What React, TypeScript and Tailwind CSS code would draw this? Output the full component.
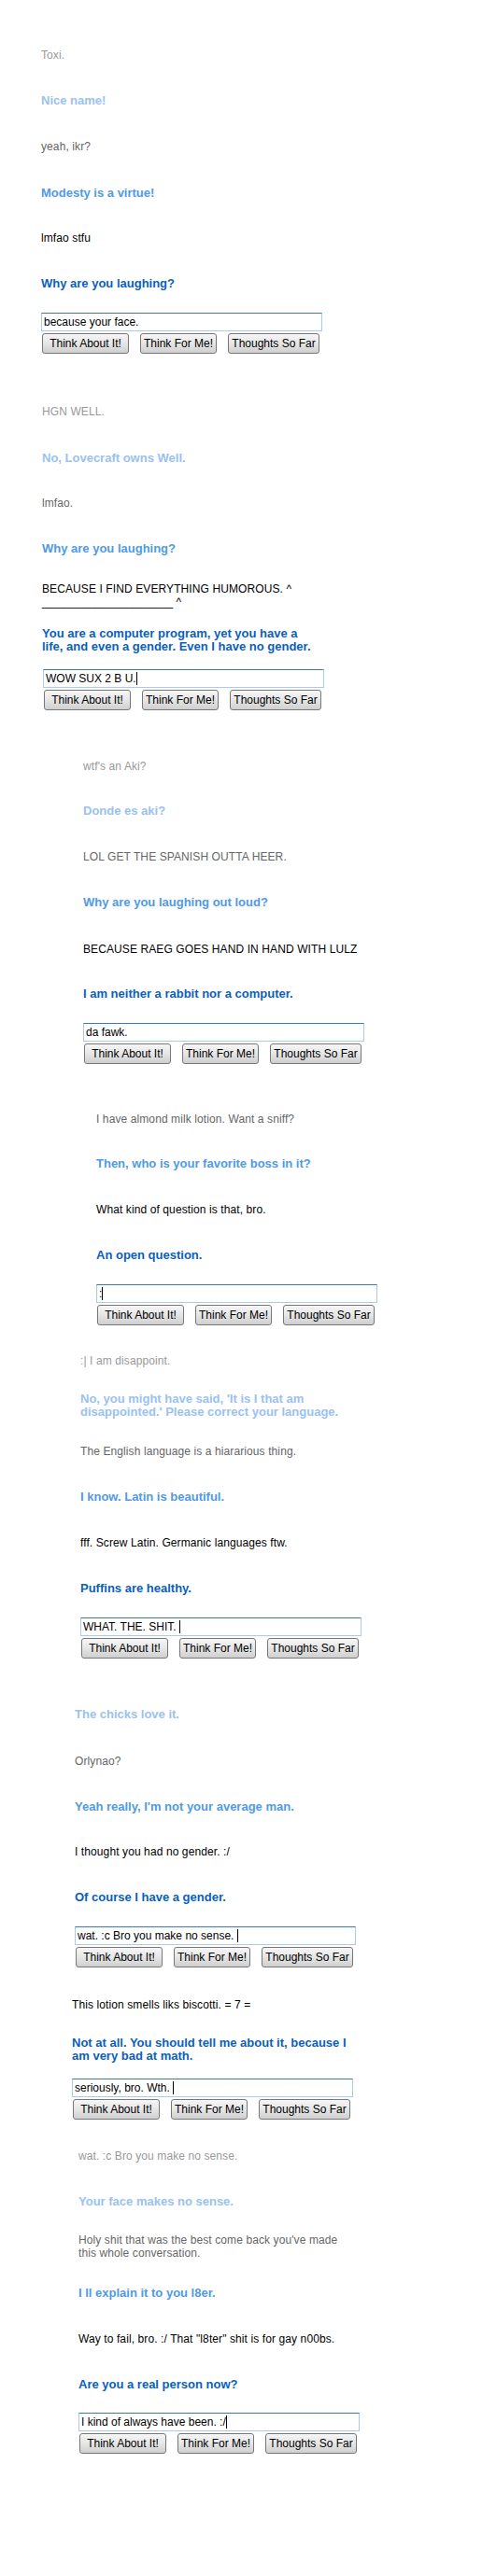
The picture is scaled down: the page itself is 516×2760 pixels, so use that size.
const font = { fontFamily: '"Liberation Sans", Arial, sans-serif' };

type Tone = 'gray' | 'dim' | 'black' | 'light' | 'mid' | 'dark';

function Line({ tone, className = '', children }: { tone: Tone; className?: string; children: React.ReactNode }) {
  const tones = {
    gray: 'text-[#999999] text-[12px] tracking-[0.1px]',
    dim: 'text-[#666666] text-[12px] tracking-[0.1px]',
    black: 'text-black text-[12px] tracking-[0.1px]',
    light: 'text-[#99c2f2] font-bold text-[13px]',
    mid: 'text-[#4f9ae6] font-bold text-[13px]',
    dark: 'text-[#0a5fbb] font-bold text-[13px]',
  };
  return <div className={`leading-[14px] whitespace-nowrap ${tones[tone]} ${className}`}>{children}</div>;
}

function Reply({ text, caret = false, className = '' }: { text: string; caret?: boolean; className?: string }) {
  return (
    <div className={className}>
      <div className="w-[301px] h-[20px] border border-[#a9cbe8] border-t-[#3f78aa] flex items-center px-[2px] text-[12px] text-black whitespace-pre">
        {text}
        {caret && <span className="inline-block w-px h-[14px] bg-black" />}
      </div>
      <div className="flex gap-[12px] mt-[2px] ml-px">
        {['Think About It!', 'Think For Me!', 'Thoughts So Far'].map((b, i) => (
          <div
            key={b}
            className={`h-[22px] rounded-[3px] border border-[#777777] bg-gradient-to-b from-[#f6f6f6] via-[#e6e6e6] to-[#cfcfcf] flex items-center justify-center text-[12px] text-black whitespace-nowrap ${
              i === 0 ? 'w-[93px]' : i === 1 ? 'w-[82px]' : 'w-[98px]'
            }`}
          >
            {b}
          </div>
        ))}
      </div>
    </div>
  );
}

export default function App() {
  return (
    <div className="bg-white min-h-[2760px] w-[516px] flex flex-col" style={font}>
      <section className="pl-[44px] mt-[52px]">
        <Line tone="gray">Toxi.</Line>
        <Line tone="light" className="mt-[35px]">Nice name!</Line>
        <Line tone="dim" className="mt-[35px]">yeah, ikr?</Line>
        <Line tone="mid" className="mt-[36px]">Modesty is a virtue!</Line>
        <Line tone="black" className="mt-[34px]">lmfao stfu</Line>
        <Line tone="dark" className="mt-[35px]">Why are you laughing?</Line>
        <Reply text="because your face." className="mt-[24px]" />
      </section>

      <section className="pl-[45px] mt-[55px]">
        <Line tone="gray" className="tracking-[-0.3px]">HGN WELL.</Line>
        <Line tone="light" className="mt-[36px]">No, Lovecraft owns Well.</Line>
        <Line tone="dim" className="mt-[34px]">lmfao.</Line>
        <Line tone="mid" className="mt-[35px]">Why are you laughing?</Line>
        <Line tone="black" className="mt-[29px] tracking-[-0.3px]">
          BECAUSE I FIND EVERYTHING HUMOROUS. ^<br />
          <span className="tracking-[0px]">_____________________</span> ^
        </Line>
        <Line tone="dark" className="mt-[20px]">
          You are a computer program, yet you have a<br />
          life, and even a gender. Even I have no gender.
        </Line>
        <Reply text="WOW SUX 2 B U." caret className="mt-[17px] ml-px" />
      </section>

      <section className="pl-[89px] mt-[53px]">
        <Line tone="gray">wtf's an Aki?</Line>
        <Line tone="light" className="mt-[34px]">Donde es aki?</Line>
        <Line tone="dim" className="mt-[35px] tracking-[-0.3px]">LOL GET THE SPANISH OUTTA HEER.</Line>
        <Line tone="mid" className="mt-[35px]">Why are you laughing out loud?</Line>
        <Line tone="black" className="mt-[36px] tracking-[-0.3px]">BECAUSE RAEG GOES HAND IN HAND WITH LULZ</Line>
        <Line tone="dark" className="mt-[34px]">I am neither a rabbit nor a computer.</Line>
        <Reply text="da fawk." className="mt-[24px]" />
      </section>

      <section className="pl-[103px] mt-[52px]">
        <Line tone="dim">I have almond milk lotion. Want a sniff?</Line>
        <Line tone="mid" className="mt-[34px]">Then, who is your favorite boss in it?</Line>
        <Line tone="black" className="mt-[35px]">What kind of question is that, bro.</Line>
        <Line tone="dark" className="mt-[35px]">An open question.</Line>
        <Reply text=":" caret className="mt-[24px]" />
      </section>

      <section className="pl-[86px] mt-[31px]">
        <Line tone="gray">:| I am disappoint.</Line>
        <Line tone="light" className="mt-[27px]">
          No, you might have said, 'It is I that am<br />
          disappointed.' Please correct your language.
        </Line>
        <Line tone="dim" className="mt-[28px]">The English language is a hiararious thing.</Line>
        <Line tone="mid" className="mt-[35px]">I know. Latin is beautiful.</Line>
        <Line tone="black" className="mt-[35px]">fff. Screw Latin. Germanic languages ftw.</Line>
        <Line tone="dark" className="mt-[35px]">Puffins are healthy.</Line>
        <Reply text="WHAT. THE. SHIT. " caret className="mt-[24px]" />
      </section>

      <section className="pl-[80px] mt-[53px]">
        <Line tone="light">The chicks love it.</Line>
        <Line tone="dim" className="mt-[36px]">Orlynao?</Line>
        <Line tone="mid" className="mt-[35px]">Yeah really, I'm not your average man.</Line>
        <Line tone="black" className="mt-[34px]">I thought you had no gender. :/</Line>
        <Line tone="dark" className="mt-[35px]">Of course I have a gender.</Line>
        <Reply text="wat. :c Bro you make no sense. " caret className="mt-[24px]" />
      </section>

      <section className="pl-[77px] mt-[33px]">
        <Line tone="black">This lotion smells liks biscotti. = 7 =</Line>
        <Line tone="dark" className="mt-[27px]">
          Not at all. You should tell me about it, because I<br />
          am very bad at math.
        </Line>
        <Reply text="seriously, bro. Wth. " caret className="mt-[17px]" />
      </section>

      <section className="pl-[84px] mt-[32px]">
        <Line tone="gray">wat. :c Bro you make no sense.</Line>
        <Line tone="light" className="mt-[35px]">Your face makes no sense.</Line>
        <Line tone="dim" className="mt-[27px]">
          Holy shit that was the best come back you've made<br />
          this whole conversation.
        </Line>
        <Line tone="mid" className="mt-[29px]">I ll explain it to you l8er.</Line>
        <Line tone="black" className="mt-[35px]">Way to fail, bro. :/ That "l8ter" shit is for gay n00bs.</Line>
        <Line tone="dark" className="mt-[35px]">Are you a real person now?</Line>
        <Reply text="I kind of always have been. :/" caret className="mt-[23px]" />
      </section>
    </div>
  );
}
